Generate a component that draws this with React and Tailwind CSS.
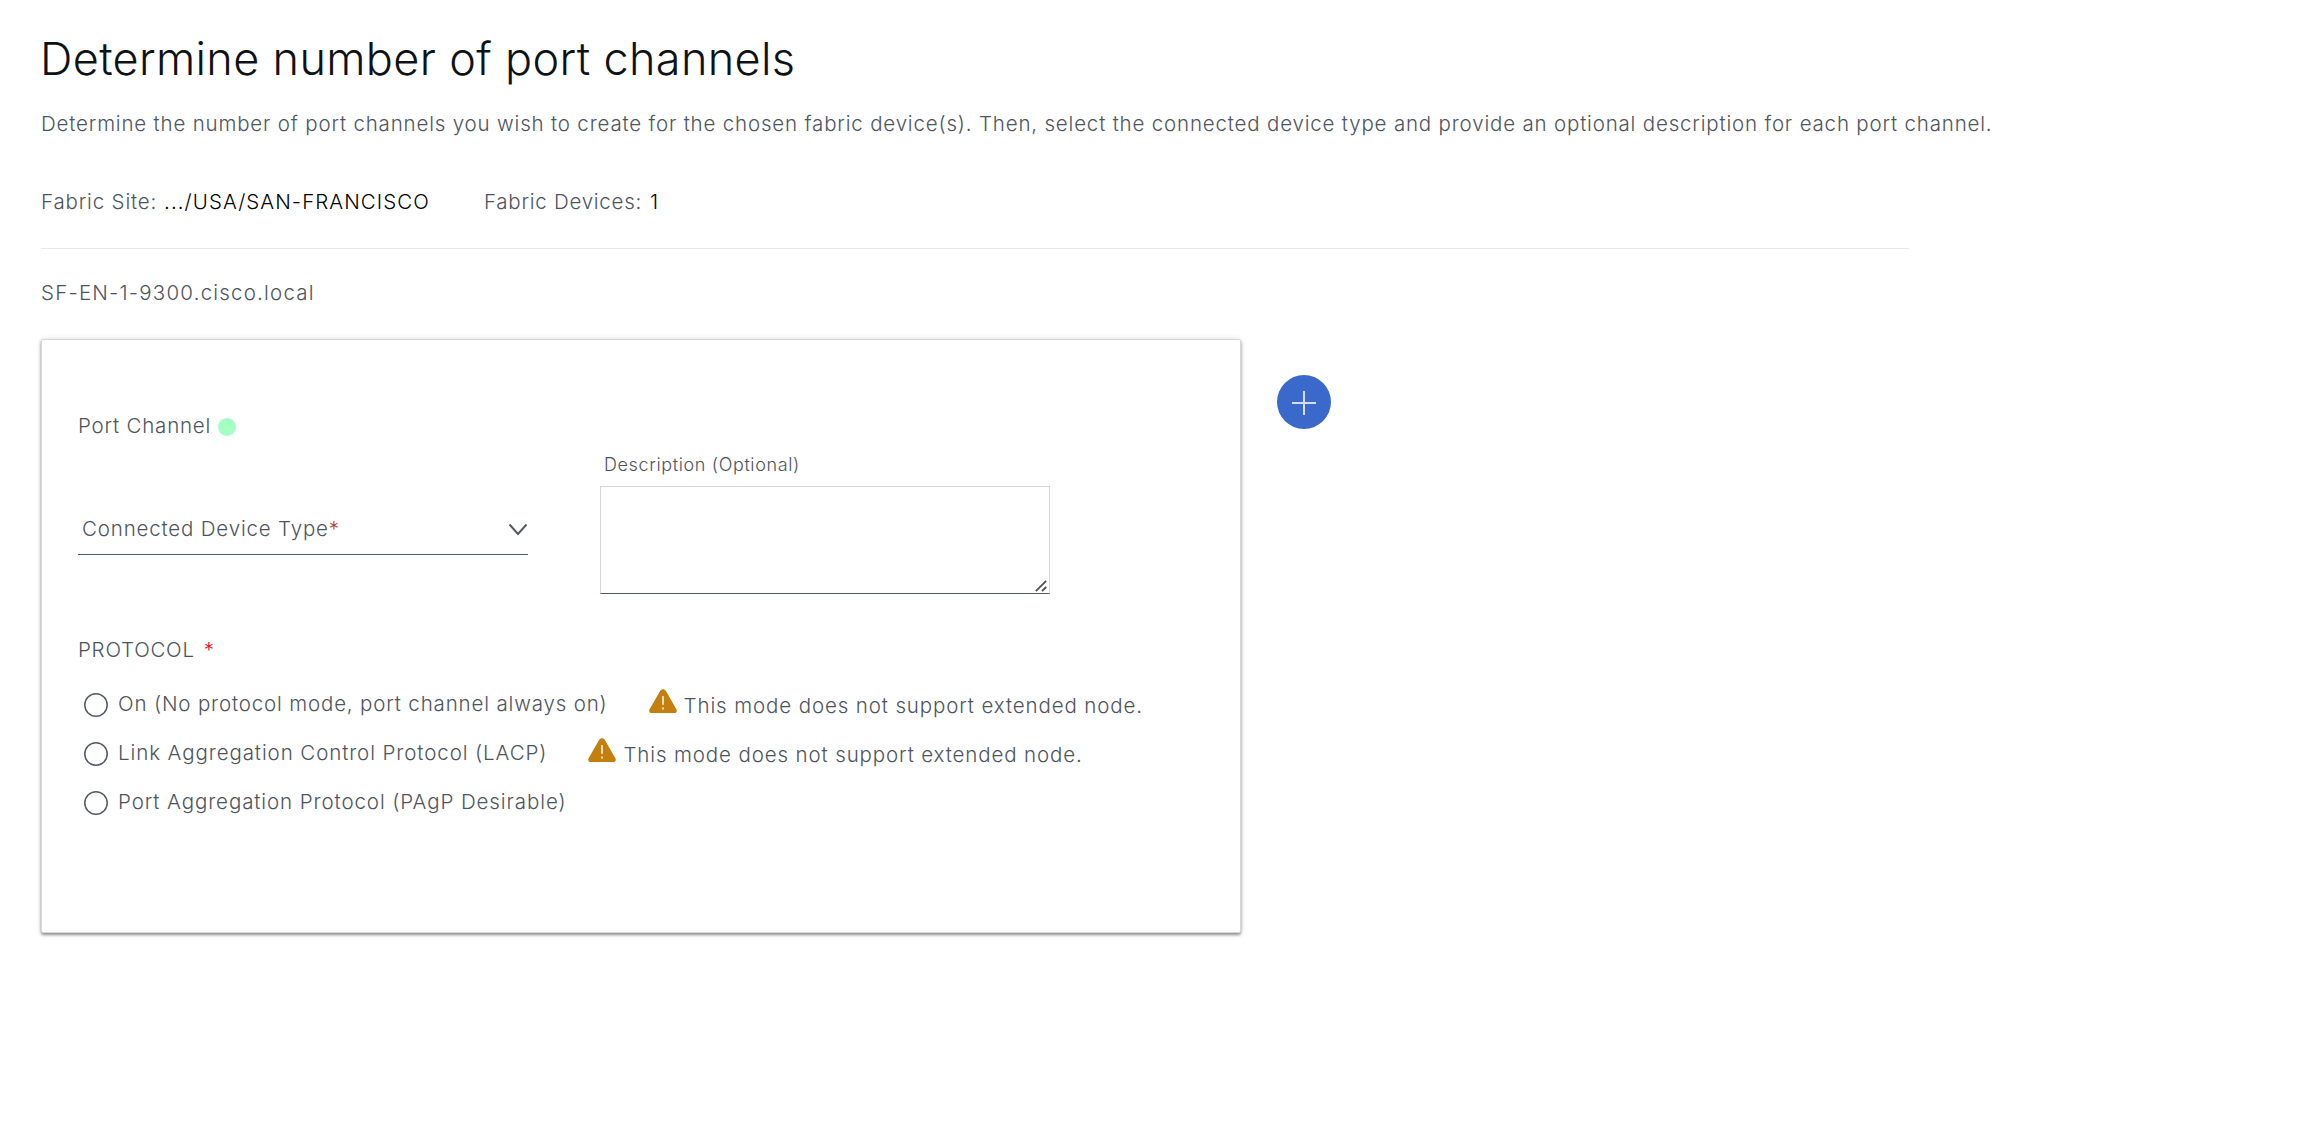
import React from 'react';

function Radio({ label, className, warning }) {
  return (
    <label className="flex h-[49px] items-start">
      <svg className="mt-[13px] h-6 w-6 shrink-0" viewBox="0 0 24 24" fill="#fff" stroke="#545b65" strokeWidth="1.5">
        <circle cx="12" cy="12" r="11.2" />
      </svg>
      <span className={'mt-[9px] ml-[10px] whitespace-nowrap leading-[30px] ' + className}>{label}</span>
      {warning && (
        <span className="ml-[41px] flex items-start">
          <WarningIcon />
          <span className="mt-[11px] ml-[7px] whitespace-nowrap leading-[30px] tracking-[0.88px]">{warning}</span>
        </span>
      )}
    </label>
  );
}

function WarningIcon() {
  return (
    <svg className="mt-[9px] h-6 w-7 shrink-0" viewBox="0 0 28 24">
      <path d="M11.2 1.8C12.3-.4 15.7-.4 16.8 1.8L27.4 20.2c1 1.8 0 3.8-2 3.8H2.6c-2 0-3-2-2-3.8Z" fill="#c47f0f" />
      <path d="M14 7v8.8M14 18.4v2.2" stroke="#f6e9d2" strokeWidth="1.8" />
    </svg>
  );
}

export default function App() {
  return (
    <main className="min-h-[1125px] bg-white pt-[29px] pl-[41px] font-['Inter','Liberation_Sans',sans-serif] text-[20.5px] font-[350] text-[#4d545d]">
      <h1 className="-ml-[1px] text-[45px] font-light leading-[60px] tracking-[0.34px] text-[#0f1214]">Determine number of port channels</h1>
      <p className="mt-5 whitespace-nowrap leading-[30px] tracking-[0.82px]">
        Determine the number of port channels you wish to create for the chosen fabric device(s). Then, select the connected device type and provide an optional description for each port channel.
      </p>

      <div className="mt-12 flex leading-[30px]">
        <div className="flex w-[443px] gap-[7px]">
          <span className="tracking-[0.83px]">Fabric Site:</span>
          <span className="tracking-[1.05px] text-black">.../USA/SAN-FRANCISCO</span>
        </div>
        <div className="flex gap-[8px]">
          <span className="tracking-[0.74px]">Fabric Devices:</span>
          <span className="text-black">1</span>
        </div>
      </div>

      <div className="mt-[31px] h-px w-[1868px] bg-[#e8e8f0]" />
      <h2 className="mt-[29px] leading-[30px] tracking-[1.2px]">SF-EN-1-9300.cisco.local</h2>

      <div className="mt-[31px] flex items-start">
        <section className="h-[594px] w-[1200px] rounded-[2px] border border-[#d6d7da] bg-white pt-[71px] pl-9 shadow-[0_2px_3px_rgba(0,0,0,0.4),0_0_6px_rgba(0,0,0,0.12)]">
          <div className="flex h-[30px] leading-[30px]">
            <span className="w-[140px] tracking-[0.8px]">Port Channel</span>
            <span className="mt-[7px] h-[18px] w-[18px] rounded-full bg-[#a5ffc3]" />
          </div>

          <div className="mt-3 flex items-start gap-[72px]">
            <div className="mt-[61px] flex h-[41px] w-[450px] justify-between border-b border-[#545b65] pl-1 leading-[30px]">
              <span className="tracking-[0.83px]">
                Connected Device Type<span className="text-[#b5391f]">*</span>
              </span>
              <svg className="mt-[9px] h-[14px] w-5" viewBox="0 0 20 14" fill="none" stroke="#545b65" strokeWidth="2">
                <path d="m1.5 1.5 8.5 9.5 8.5-9.5" />
              </svg>
            </div>
            <div className="w-[450px]">
              <div className="pl-1 text-[18px] leading-6 tracking-[0.62px]">Description (Optional)</div>
              <div className="relative mt-[9px] h-[108px]">
                <textarea className="block h-full w-full resize-none border border-[#d6d7da] border-b-[#545b65] bg-white" aria-label="Description" />
                <svg className="absolute right-[3px] bottom-[2px] h-3 w-3" viewBox="0 0 12 12" stroke="#4f5052" strokeWidth="1.8">
                  <path d="M.8 11.2 11.2.8M7 11.2l4.2-4.2" />
                </svg>
              </div>
            </div>
          </div>

          <div className="mt-[41px] leading-[30px]">
            <span className="tracking-[0.75px]">PROTOCOL</span>
            <span className="ml-[9px] text-[#e2062c]">*</span>
          </div>

          <div className="mt-[15px] pl-[6px]">
            <Radio label="On (No protocol mode, port channel always on)" className="tracking-[0.84px]" warning="This mode does not support extended node." />
            <Radio label="Link Aggregation Control Protocol (LACP)" className="tracking-[0.91px]" warning="This mode does not support extended node." />
            <Radio label="Port Aggregation Protocol (PAgP Desirable)" className="tracking-[0.91px]" />
          </div>
        </section>

        <button className="mt-9 ml-9 flex h-[54px] w-[54px] items-center justify-center rounded-full bg-[#3a69cb]" aria-label="Add port channel">
          <svg className="mt-[2px] h-6 w-6" viewBox="0 0 24 24" stroke="#d3def4" strokeWidth="2">
            <path d="M12 0v24M0 12h24" />
          </svg>
        </button>
      </div>
    </main>
  );
}
